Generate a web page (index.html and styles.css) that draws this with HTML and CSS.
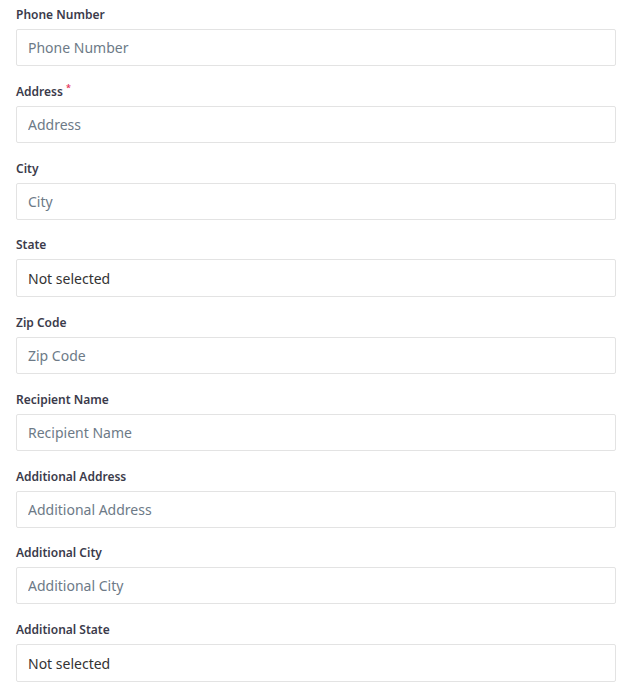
FILE: index.html
```html
<!DOCTYPE html>
<html>
<head>
    <meta charset="utf-8"/>
    <title>Shipping form</title>
    <link rel="stylesheet" href="styles.css">
</head>

<body>
<form class="form">
    <div class="field">
        <label class="label">Phone Number</label>
        <input class="control" type="text" placeholder="Phone Number"/>
    </div>
    <div class="field">
        <label class="label">Address<span class="req">*</span></label>
        <input class="control" type="text" placeholder="Address"/>
    </div>
    <div class="field">
        <label class="label">City</label>
        <input class="control" type="text" placeholder="City"/>
    </div>
    <div class="field">
        <label class="label">State</label>
        <select class="control select">
            <option>Not selected</option>
        </select>
    </div>
    <div class="field">
        <label class="label">Zip Code</label>
        <input class="control" type="text" placeholder="Zip Code"/>
    </div>
    <div class="field">
        <label class="label">Recipient Name</label>
        <input class="control" type="text" placeholder="Recipient Name"/>
    </div>
    <div class="field">
        <label class="label">Additional Address</label>
        <input class="control" type="text" placeholder="Additional Address"/>
    </div>
    <div class="field">
        <label class="label">Additional City</label>
        <input class="control" type="text" placeholder="Additional City"/>
    </div>
    <div class="field">
        <label class="label">Additional State</label>
        <select class="control select">
            <option>Not selected</option>
        </select>
    </div>
</form>
</body>
</html>
```

FILE: styles.css
```css
* {
    margin: 0;
    padding: 0;
    box-sizing: border-box;
}
body {
    background: #fff;
    font-family: "Noto Sans", "Open Sans", sans-serif;
    padding: 5px 16px;
}
.form {
    width: 600px;
}
.field {
    display: flex;
    flex-direction: column;
    gap: 4px;
    margin-bottom: 15.75px;
}
.label {
    font-size: 12px;
    line-height: 20px;
    font-weight: 600;
    color: #3b3b4b;
}
.req {
    color: #e5335a;
    font-size: 9px;
    vertical-align: top;
    position: relative;
    top: -4px;
    margin-left: 3px;
}
.control {
    width: 600px;
    height: 37px;
    border: 1px solid #e3e3e3;
    border-radius: 2px;
    padding: 0 11px;
    font-family: inherit;
    font-size: 14px;
    color: #333;
    background: #fff;
    outline: none;
}
.control::placeholder {
    color: #6d7a87;
}
.select {
    height: 38px;
    appearance: none;
    -webkit-appearance: none;
}
```
